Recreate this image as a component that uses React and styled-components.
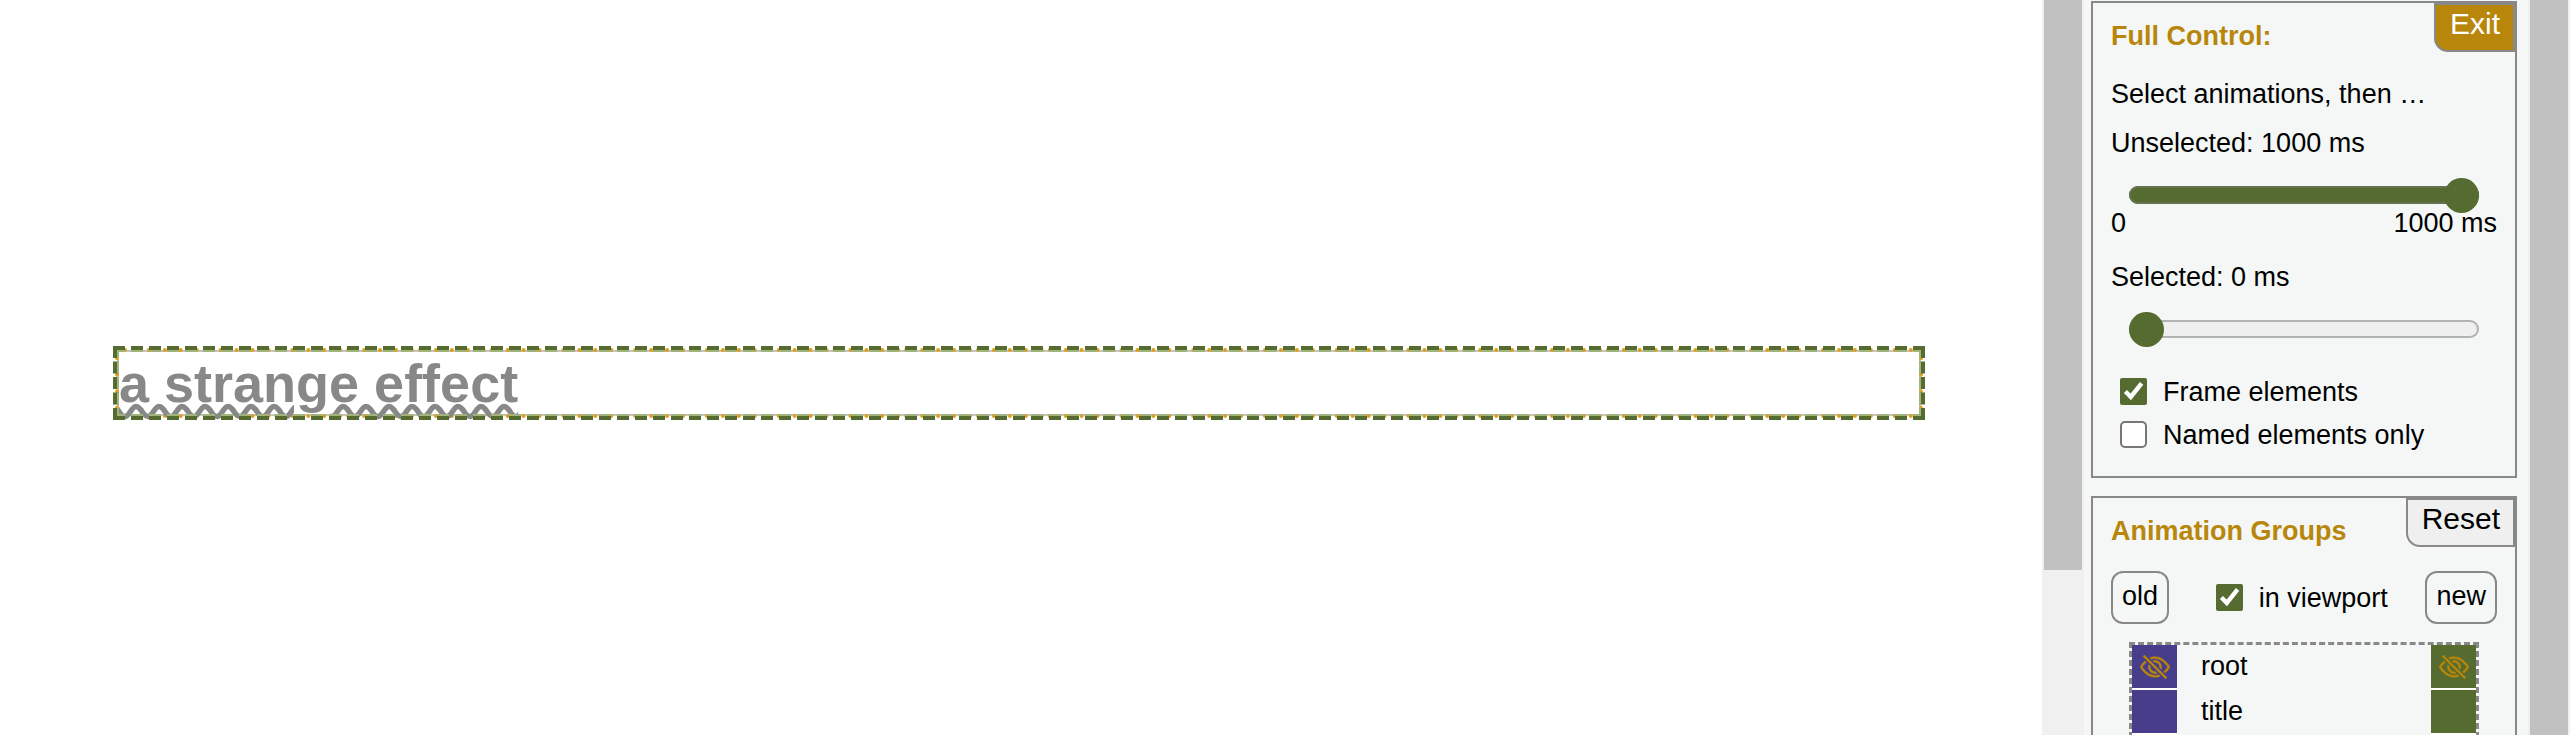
import React, { useState } from "react";
import styled, { createGlobalStyle } from "styled-components";
import { BsEyeSlash } from "react-icons/bs";

const olive = "#556b2f";
const gold = "#b8860b";
const line = "#888";

const GlobalStyle = createGlobalStyle`
  *, *::before, *::after { box-sizing: border-box; }
  body {
    margin: 0;
    overflow: hidden;
    background: #fff;
    color: #000;
    font: 27px/31px "Liberation Sans", Arial, sans-serif;
  }
  button, input { font: inherit; color: inherit; margin: 0; }
`;

const Page = styled.div`
  display: flex;
  height: 100vh;
  overflow: hidden;
`;

const Stage = styled.main`
  flex: 1;
  min-width: 0;
  padding: 346px 117px 0 113px;
`;

const ScrollTrack = styled.div`
  flex: none;
  width: 42px;
  padding: 0 2px;
  background: #f0f0f0;
`;

const ScrollThumb = styled.div`
  height: ${(p) => p.$size};
  background: #c1c1c1;
`;

/* Dashed frame: dark outer band, lighter inner band, over a thin grey line. */
const Frame = styled.div`
  position: relative;
  border: 4px solid transparent;
  padding: 2px;
  background:
    linear-gradient(#fff, #fff) content-box,
    linear-gradient(#c4c4c4, #c4c4c4) padding-box;
  &::before,
  &::after {
    content: "";
    position: absolute;
    inset: -4px;
    border: 6px dashed ${olive};
    pointer-events: none;
  }
  &::after {
    border-color: #a0b47c;
    clip-path: inset(4px);
  }
`;

const InnerFrame = styled.div`
  margin: -4px;
  border: 4px dotted #e0a01c;
`;

const Title = styled.h1`
  margin: 0;
  font-size: 54px;
  line-height: 62px;
  color: ${line};
  text-decoration: underline wavy;
`;

const Sidebar = styled.aside`
  flex: none;
  width: 444px;
  padding: 1px 11px 0 7px;
  display: flex;
  flex-direction: column;
  gap: 18px;
  background: #f4f7f6;
`;

const Panel = styled.section`
  flex: none;
  position: relative;
  padding: 18px 18px 25px;
  border: 2px solid ${line};
`;

const PanelTitle = styled.h2`
  margin: 0 0 ${(p) => p.$gap};
  font-size: 27px;
  line-height: 31px;
  color: ${gold};
`;

const CornerButton = styled.button`
  position: absolute;
  top: 0;
  right: 0;
  padding: 2px 13px 9px 14px;
  border: 2px solid ${line};
  border-radius: 0 0 0 14px;
  font-size: 30px;
  line-height: 34px;
  background: ${(p) => (p.$primary ? gold : "#efefef")};
  color: ${(p) => (p.$primary ? "#fff" : "#000")};
`;

const Hint = styled.p`
  margin: 0 0 18px;
`;

const SliderField = styled.div`
  margin-bottom: ${(p) => p.$gap};
  label { display: block; }
`;

const Slider = styled.input`
  display: block;
  appearance: none;
  width: calc(100% - 36px);
  height: 18px;
  margin: 27px 18px 4px;
  border-radius: 9px;
  box-shadow: inset 0 0 0 2px ${(p) => (p.$full ? "#667352" : "#b2b2b2")};
  background: ${(p) => (p.$full ? olive : "#efefef")};
  &::-webkit-slider-thumb {
    appearance: none;
    width: 35px;
    height: 35px;
    border-radius: 50%;
    background: ${olive};
  }
`;

const Scale = styled.div`
  display: flex;
  justify-content: space-between;
`;

const CheckLabel = styled.label`
  display: flex;
  align-items: center;
  gap: 16px;
  margin-left: 9px;
  & + & { margin-top: 10px; }
  span { padding-top: 2px; }
  input {
    width: 27px;
    height: 27px;
    accent-color: ${olive};
  }
  input:not(:checked) {
    appearance: none;
    border: 2px solid #767676;
    border-radius: 5px;
    background: #fff;
  }
`;

const Toolbar = styled.div`
  display: flex;
  align-items: center;
  justify-content: space-between;
  margin-bottom: 18px;
`;

const SmallButton = styled.button`
  height: 53px;
  padding: 0 9px 2px;
  border: 2px solid ${line};
  border-radius: 12px;
  background: transparent;
`;

const GroupList = styled.ul`
  list-style: none;
  margin: 0 18px;
  padding: 0;
  border: 3px dashed ${line};
`;

const GroupRow = styled.li`
  display: flex;
  align-items: center;
  height: 45px;
`;

const GroupName = styled.span`
  flex: 1;
  padding: 0 24px 2px;
`;

const Swatch = styled.button`
  display: flex;
  align-items: center;
  justify-content: center;
  width: 45px;
  height: 45px;
  padding: 0;
  border: 0;
  border-bottom: 2px solid #fff;
  background: ${(p) => p.$color};
  color: ${gold};
  svg {
    width: 30px;
    height: 30px;
    stroke: currentColor;
    stroke-width: 0.3;
  }
`;

const groups = [
  { name: "root", hidden: true },
  { name: "title", hidden: false },
];

function Check({ children, initial = false }) {
  const [on, setOn] = useState(initial);
  return (
    <CheckLabel>
      <input type="checkbox" checked={on} onChange={() => setOn(!on)} />
      <span>{children}</span>
    </CheckLabel>
  );
}

export default function App() {
  const [unselected, setUnselected] = useState(1000);
  const [selected, setSelected] = useState(0);
  return (
    <>
      <GlobalStyle />
      <Page>
        <Stage>
          <Frame>
            <InnerFrame>
              <Title>a strange effect</Title>
            </InnerFrame>
          </Frame>
        </Stage>
        <ScrollTrack>
          <ScrollThumb $size="570px" />
        </ScrollTrack>
        <Sidebar>
          <Panel>
            <PanelTitle $gap="27px">Full Control:</PanelTitle>
            <CornerButton $primary>Exit</CornerButton>
            <Hint>Select animations, then …</Hint>
            <SliderField $gap="23px">
              <label htmlFor="unselected">Unselected: {unselected} ms</label>
              <Slider
                id="unselected"
                type="range"
                min="0"
                max="1000"
                value={unselected}
                $full={unselected > 0}
                onChange={(e) => setUnselected(Number(e.target.value))}
              />
              <Scale>
                <span>0</span>
                <span>1000 ms</span>
              </Scale>
            </SliderField>
            <SliderField $gap="37px">
              <label htmlFor="selected">Selected: {selected} ms</label>
              <Slider
                id="selected"
                type="range"
                min="0"
                max="1000"
                value={selected}
                $full={selected > 0}
                onChange={(e) => setSelected(Number(e.target.value))}
              />
            </SliderField>
            <Check initial>Frame elements</Check>
            <Check>Named elements only</Check>
          </Panel>
          <Panel>
            <PanelTitle $gap="24px">Animation Groups</PanelTitle>
            <CornerButton>Reset</CornerButton>
            <Toolbar>
              <SmallButton>old</SmallButton>
              <Check initial>in viewport</Check>
              <SmallButton>new</SmallButton>
            </Toolbar>
            <GroupList>
              {groups.map((g) => (
                <GroupRow key={g.name}>
                  <Swatch $color="#483d8b" aria-label={`old ${g.name}`}>
                    {g.hidden && <BsEyeSlash />}
                  </Swatch>
                  <GroupName>{g.name}</GroupName>
                  <Swatch $color={olive} aria-label={`new ${g.name}`}>
                    {g.hidden && <BsEyeSlash />}
                  </Swatch>
                </GroupRow>
              ))}
            </GroupList>
          </Panel>
        </Sidebar>
        <ScrollTrack>
          <ScrollThumb $size="100%" />
        </ScrollTrack>
      </Page>
    </>
  );
}
